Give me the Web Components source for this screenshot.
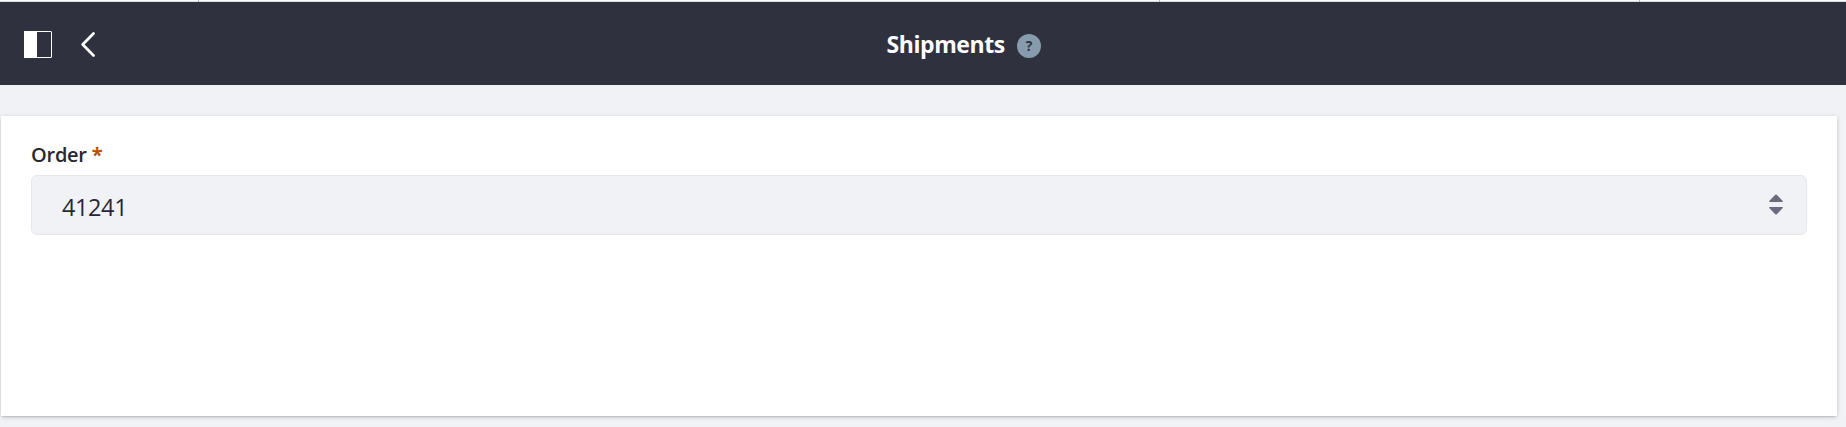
<!DOCTYPE html>
<html lang="en"><head><meta charset="utf-8"><title>Shipments</title>
<style>html,body{margin:0;height:100%;background:#f1f2f5;overflow:hidden}body{font-family:"Open Sans","Noto Sans",sans-serif}</style></head>
<body><shipments-page></shipments-page>
<script>
const define=(name,html)=>customElements.define(name,class extends HTMLElement{
 constructor(){super();this.attachShadow({mode:'open'}).innerHTML=html;}
});
define('help-badge',`<style>:host{display:flex;width:24px;height:24px;border-radius:50%;background:#869cad;color:#30313f;align-items:center;justify-content:center;font:700 14px/24px "Open Sans",sans-serif}</style><slot></slot>`);
define('control-bar',`<style>
:host{display:grid;grid-template-columns:1fr auto 1fr;align-items:center;height:83px;background:#30313f;color:#fff;box-sizing:border-box}
.left{display:flex;align-items:center;padding:2px 0 0 24px;gap:29px}
.title{display:flex;align-items:center;gap:12px;padding-left:82px}
h1{margin:0;font-size:23px;line-height:32px;font-weight:700;letter-spacing:-.42px;width:118px;white-space:nowrap;text-indent:-.5px}
help-badge{margin-top:5px}svg{display:block}
</style><div class="left">
<svg width="28" height="27" viewBox="0 0 28 27"><rect x=".5" y=".5" width="27" height="26" rx=".5" fill="none" stroke="#fff"/><path d="M0 0h13v27H0z" fill="#fff"/></svg>
<svg width="14" height="25" viewBox="0 0 14 25"><path d="M12.5 1.5 1.7 12.5l10.8 11" fill="none" stroke="#fff" stroke-width="2.7" stroke-linecap="round" stroke-linejoin="round"/></svg>
</div><div class="title"><h1><slot></slot></h1><help-badge>?</help-badge></div>`);
define('select-box',`<style>
:host{display:flex;align-items:center;justify-content:space-between;height:60px;box-sizing:border-box;border:1px solid #e7e7ed;border-radius:6px;background:#f1f2f5;padding:0 23px 0 30px;color:#272833;font-size:23.5px}
span{padding-top:4px;letter-spacing:-.4px}svg{display:block;margin-bottom:1px}
</style><span><slot></slot></span><svg width="14" height="21" viewBox="0 0 14 21"><path d="M.4 8Q-.1 7.2.7 6.5L6 1Q7 0 8 1l5.3 5.5q.8.7.3 1.5ZM.4 13q-.5.8.3 1.5L6 20q1 1 2 0l5.3-5.5q.8-.7.3-1.5Z" fill="#6b6c7e"/></svg>`);
define('form-card',`<style>
:host{display:block;box-sizing:border-box;height:300px;margin:31px 9px 0 1px;padding:24px 30px;background:#fff;box-shadow:0 1px 5px -1px rgba(0,0,0,.3),0 2px 1px -1px rgba(0,0,0,.08)}
</style><slot></slot>`);
define('field-label',`<style>
:host{display:block;height:35px;font-size:20px;line-height:29px;letter-spacing:-.25px;font-weight:600;color:#272833}
b{color:#b95000;font-weight:700;margin-left:5px}
</style><slot></slot><b>*</b>`);
define('top-edge',`<style>:host{display:grid;grid-template-columns:198px 1px 960px 1px 479px 1px 1fr;height:2px;background:linear-gradient(#fff 50%,#dcdde0 50%)}i{background:#b5b5b9}</style><span></span><i></i><span></span><i></i><span></span><i></i>`);
define('shipments-page',`<style>:host{display:block;height:427px}</style><top-edge></top-edge><control-bar>Shipments</control-bar>
<form-card><field-label>Order</field-label><select-box>41241</select-box></form-card>`);
</script></body></html>
